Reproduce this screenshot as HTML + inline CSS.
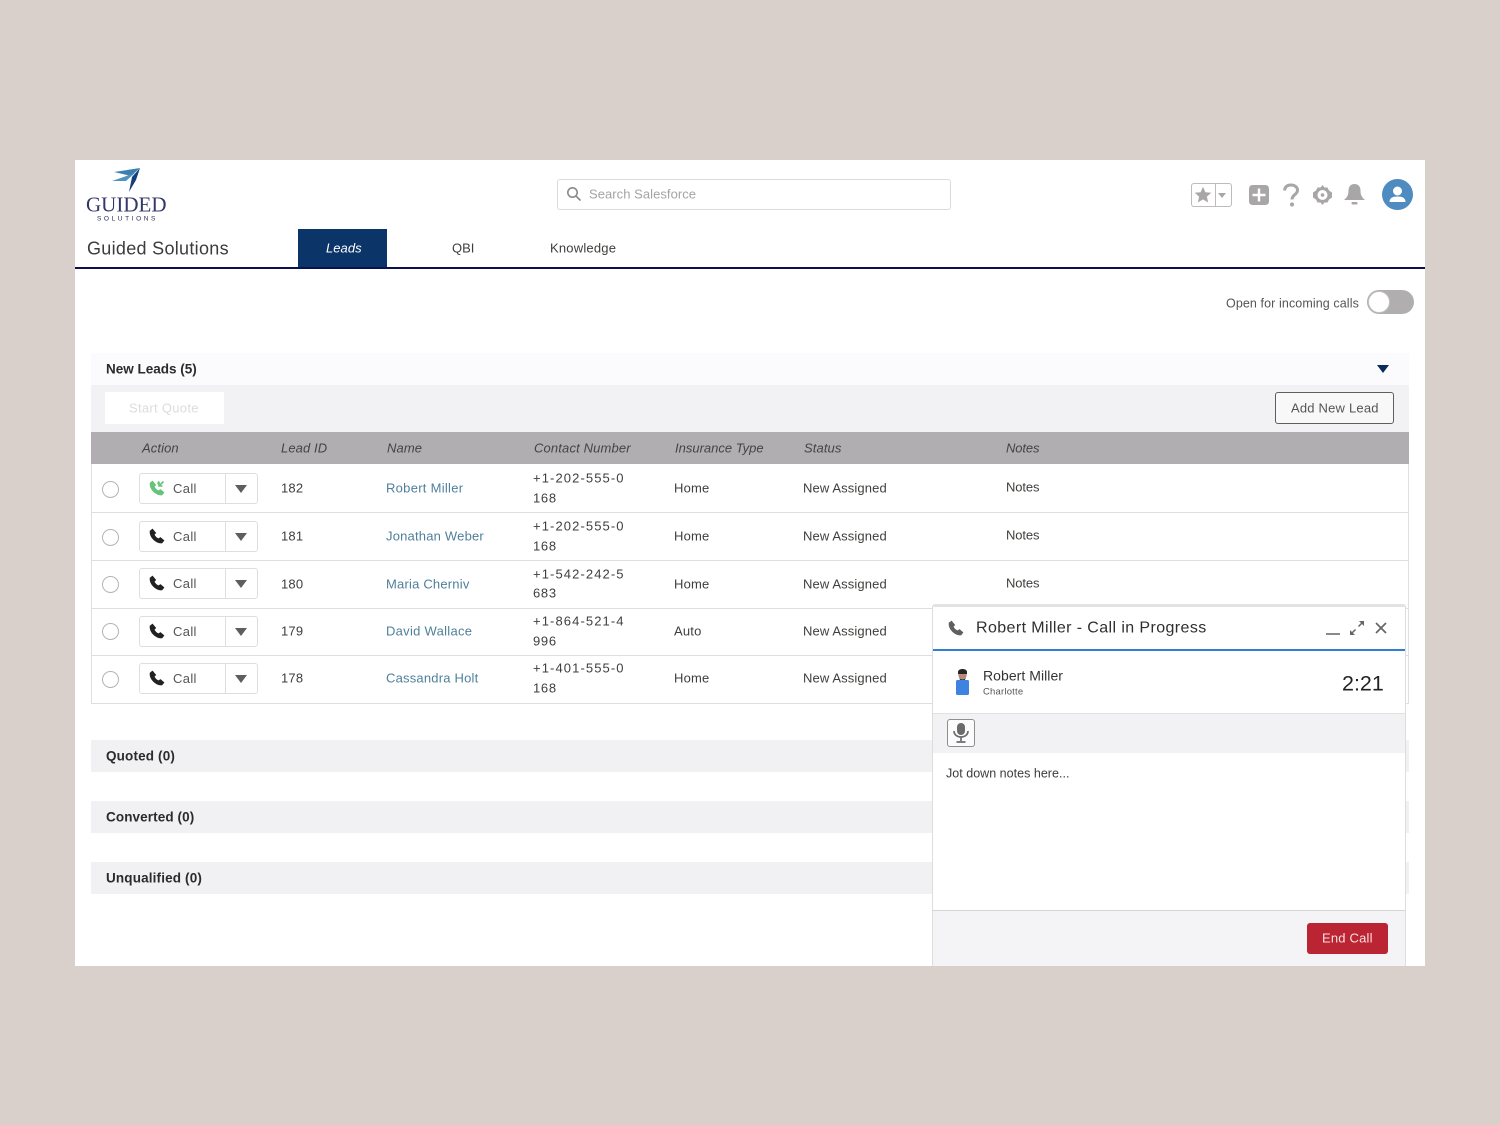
<!DOCTYPE html>
<html><head><meta charset="utf-8"><style>
html,body{margin:0;padding:0;background:#d9d0cb}
body{width:1500px;height:1125px;position:relative;overflow:hidden;font-family:"Liberation Sans",sans-serif;color:#3e3e3c}
#app{position:absolute;left:75px;top:160px;width:1350px;height:806px;background:#fff;overflow:hidden;filter:blur(.3px)}
.a{position:absolute}
.t{position:absolute;white-space:nowrap;font-size:13px;letter-spacing:.2px;line-height:16px;transform:translateY(calc(-50% + .5px))}
.h{font-style:italic;color:#444;letter-spacing:.1px}
.l{color:#4f7f9b;letter-spacing:.28px}
.s{letter-spacing:.12px}
.n{letter-spacing:-.1px}
.c1{letter-spacing:1.1px}
.c2{letter-spacing:.7px}
.b{font-weight:bold;font-size:13.5px;color:#2b2b2b;letter-spacing:.2px}
.bar{position:absolute;left:16px;width:1318px;height:32px;background:#f1f0f2}
.row{position:absolute;left:16px;width:1318px;border-bottom:1px solid #e0dedd}
.radio{position:absolute;left:27px;width:15px;height:15px;border:1px solid #b5b3b3;border-radius:50%;background:#fff}
.btn{position:absolute;left:64px;width:117px;height:29px;border:1px solid #e0dedd;border-radius:3px;background:#fff}
.btn i{position:absolute;left:85px;top:0;bottom:0;border-left:1px solid #e0dedd}
.btn b{position:absolute;left:95px;top:11px;width:0;height:0;border-left:6px solid transparent;border-right:6px solid transparent;border-top:8px solid #5e5e5e}
.btn svg{position:absolute;left:9px;top:6px}
.btn span{position:absolute;left:33px;top:6.500px;font-size:13px;letter-spacing:.35px;line-height:16px;color:#555}
</style></head><body>
<div id="app">
<!-- logo -->
<svg class="a" style="left:36px;top:6px" width="32" height="28" viewBox="0 0 32 28"><path d="M3 6L29 2L20 10Z" fill="#3d7fb0"/><path d="M1 15L24 7L15 15Z" fill="#4f93c2"/><path d="M29 2L25 14L18 26L21 11Z" fill="#143f7c"/></svg>
<div class="t" style="left:11px;top:44px;font-family:'Liberation Serif',serif;font-size:21px;letter-spacing:0;color:#34376a">GUIDED</div>
<div class="t" style="left:22px;top:59px;font-size:6.5px;letter-spacing:2.6px;color:#2a2d55">SOLUTIONS</div>
<div class="t" style="left:12px;top:88px;font-size:18px;letter-spacing:.3px;color:#3c3c3c">Guided Solutions</div>
<div class="a" style="left:223px;top:69px;width:89px;height:38px;background:#0b3568"></div>
<div class="t" style="left:251px;top:88px;color:#fff;font-style:italic;letter-spacing:.05px">Leads</div>
<div class="t" style="left:377px;top:88px;letter-spacing:0">QBI</div>
<div class="t" style="left:475px;top:88px">Knowledge</div>
<div class="a" style="left:0;top:107px;width:1350px;height:2px;background:#0c0f50"></div>
<!-- search -->
<div class="a" style="left:482px;top:19px;width:392px;height:29px;border:1px solid #dddbda;border-radius:3px;background:#fff"></div>
<svg class="a" style="left:491px;top:26px" width="16" height="16" viewBox="0 0 16 16" fill="none" stroke="#8a8a8a" stroke-width="1.6"><circle cx="6.5" cy="6.5" r="4.7"/><path d="M10 10L14.5 14.5"/></svg>
<div class="t" style="left:514px;top:34px;color:#a5a3a3;letter-spacing:.05px">Search Salesforce</div>
<!-- top icons -->
<div class="a" style="left:1116px;top:23px;width:39px;height:22px;border:1px solid #bdbbbb;border-radius:3px"></div>
<div class="a" style="left:1140px;top:23px;width:1px;height:24px;background:#bdbbbb"></div>
<svg class="a" style="left:1119px;top:26px" width="18" height="17" viewBox="0 0 24 23"><path d="M12 1l3.2 7.4 8 .7-6 5.3 1.8 7.9-7-4.2-7 4.2 1.8-7.9-6-5.3 8-.7z" fill="#a8a6a6"/></svg>
<div class="a" style="left:1143px;top:33px;border-left:4px solid transparent;border-right:4px solid transparent;border-top:5px solid #a8a6a6"></div>
<svg class="a" style="left:1174px;top:25px" width="20" height="20" viewBox="0 0 20 20"><rect width="20" height="20" rx="3.5" fill="#a8a6a6"/><path d="M10 3.5v13M3.5 10h13" stroke="#fff" stroke-width="2.4"/></svg>
<svg class="a" style="left:1207px;top:23px" width="18" height="24" viewBox="0 0 18 24" fill="none"><path d="M2.5 7.500C3 3.500 5.500 2 9 2c3.600 0 6.500 2 6.500 5.200 0 4.300-5.500 4.500-5.500 9.300" stroke="#a8a6a6" stroke-width="3"/><circle cx="10" cy="21.500" r="2.100" fill="#a8a6a6"/></svg>
<svg class="a" style="left:1237px;top:24px" width="21" height="22" viewBox="0 0 21 22"><path d="M10.500 1l2 2.500h3L17 6.500l3 2v5l-3 2-1.500 3h-3l-2 2.500-2-2.500h-3L4 15.500l-3-2v-5l3-2 1.500-3h3z" fill="#a8a6a6"/><circle cx="10.500" cy="11" r="5" fill="#fff"/><circle cx="10.500" cy="11" r="1.800" fill="#a8a6a6"/></svg>
<svg class="a" style="left:1268px;top:23px" width="23" height="23" viewBox="0 0 23 23"><path d="M11.500 1c4 0 6 3 6 6.500 0 4 1 6.500 4.500 9.500H1c3.500-3 4.500-5.500 4.500-9.500C5.500 4 7.500 1 11.500 1z" fill="#a8a6a6"/><rect x="8.500" y="19" width="6" height="2.500" rx="1" fill="#a8a6a6"/></svg>
<svg class="a" style="left:1307px;top:19px" width="31" height="31" viewBox="0 0 31 31"><circle cx="15.500" cy="15.500" r="15.500" fill="#4d8bc0"/><circle cx="15.500" cy="12" r="4.500" fill="#fff"/><path d="M7.500 23c0-4 3-5.500 8-5.500s8 1.500 8 5.500z" fill="#fff"/></svg>
<!-- toggle -->
<div class="t" style="left:1151px;top:143px;font-size:12.500px;letter-spacing:.1px;color:#555">Open for incoming calls</div>
<div class="a" style="left:1292px;top:130px;width:47px;height:24px;border-radius:12px;background:#b0aeae"></div>
<div class="a" style="left:1293px;top:131px;width:20px;height:20px;border-radius:50%;background:#fff;border:1px solid #c4c2c2"></div>
<!-- new leads -->
<div class="a" style="left:16px;top:193px;width:1318px;height:32px;background:#fbfafc"></div>
<div class="t b" style="left:31px;top:209px;letter-spacing:0">New Leads (5)</div>
<div class="a" style="left:1302px;top:205px;border-left:6.500px solid transparent;border-right:6.500px solid transparent;border-top:8px solid #0b2a5e"></div>
<div class="a" style="left:16px;top:225px;width:1318px;height:47px;background:#f2f1f3"></div>
<div class="a" style="left:30px;top:232px;width:119px;height:32px;background:#fff"></div>
<div class="t" style="left:54px;top:248px;color:#dcdcdc;letter-spacing:.3px">Start Quote</div>
<div class="a" style="left:1200px;top:232px;width:117px;height:30px;border:1px solid #5e5e5e;border-radius:3px;background:#f8f8f9"></div>
<div class="t" style="left:1216px;top:248px;color:#555">Add New Lead</div>
<!-- table head -->
<div class="a" style="left:16px;top:272px;width:1318px;height:32px;background:#b0aeb0"></div>
<div class="t h" style="left:67px;top:288px">Action</div>
<div class="t h" style="left:206px;top:288px">Lead ID</div>
<div class="t h" style="left:312px;top:288px">Name</div>
<div class="t h" style="left:459px;top:288px;letter-spacing:.15px">Contact Number</div>
<div class="t h" style="left:600px;top:288px;letter-spacing:0">Insurance Type</div>
<div class="t h" style="left:729px;top:288px">Status</div>
<div class="t h" style="left:931px;top:288px;letter-spacing:-.1px">Notes</div>
<div class="a" style="left:16px;top:304px;width:1px;height:240px;background:#e2e0df"></div>
<div class="a" style="left:1333px;top:304px;width:1px;height:240px;background:#e2e0df"></div>
<svg width="0" height="0" style="position:absolute"><defs><path id="ph" d="M3.500 1L1 3c-.5 6 5.500 12.500 12 12l2-2.500-3.500-3-2 1.300C7.500 10 6 8.500 5.200 6.500L6.800 5z"/></defs></svg>
<!-- rows -->
<div class="row" style="top:304px;height:48px"></div>
<div class="radio" style="top:321px"></div>
<div class="btn" style="top:313px"><svg width="16" height="16" viewBox="0 0 16 16" fill="#67c27a" stroke="#67c27a" stroke-width=".6"><use href="#ph"/><path d="M9 1.500l1 1-1.500 1.500M14.500 1.500L10 6M10 2.500v3.500h3.500" fill="none" stroke="#67c27a" stroke-width="1.600"/></svg><span>Call</span><i></i><b></b></div>
<div class="t" style="left:206px;top:328px">182</div><div class="t l" style="left:311px;top:328px">Robert Miller</div>
<div class="t c1" style="left:458px;top:318px">+1-202-555-0</div><div class="t c2" style="left:458px;top:338px">168</div>
<div class="t" style="left:599px;top:328px">Home</div><div class="t s" style="left:728px;top:328px">New Assigned</div><div class="t n" style="left:931px;top:327px">Notes</div>

<div class="row" style="top:353px;height:47px"></div>
<div class="radio" style="top:369px"></div>
<div class="btn" style="top:361px"><svg width="16" height="16" viewBox="0 0 16 16" fill="#222" stroke="#222" stroke-width=".6"><use href="#ph"/></svg><span>Call</span><i></i><b></b></div>
<div class="t" style="left:206px;top:376px">181</div><div class="t l" style="left:311px;top:376px;letter-spacing:.2px">Jonathan Weber</div>
<div class="t c1" style="left:458px;top:366px">+1-202-555-0</div><div class="t c2" style="left:458px;top:386px">168</div>
<div class="t" style="left:599px;top:376px">Home</div><div class="t s" style="left:728px;top:376px">New Assigned</div><div class="t n" style="left:931px;top:375px">Notes</div>

<div class="row" style="top:401px;height:47px"></div>
<div class="radio" style="top:416px"></div>
<div class="btn" style="top:408px"><svg width="16" height="16" viewBox="0 0 16 16" fill="#222" stroke="#222" stroke-width=".6"><use href="#ph"/></svg><span>Call</span><i></i><b></b></div>
<div class="t" style="left:206px;top:424px">180</div><div class="t l" style="left:311px;top:424px;letter-spacing:.2px">Maria Cherniv</div>
<div class="t c1" style="left:458px;top:414px">+1-542-242-5</div><div class="t c2" style="left:458px;top:433px">683</div>
<div class="t" style="left:599px;top:424px">Home</div><div class="t s" style="left:728px;top:424px">New Assigned</div><div class="t n" style="left:931px;top:423px">Notes</div>

<div class="row" style="top:449px;height:46px"></div>
<div class="radio" style="top:463px"></div>
<div class="btn" style="top:456px"><svg width="16" height="16" viewBox="0 0 16 16" fill="#222" stroke="#222" stroke-width=".6"><use href="#ph"/></svg><span>Call</span><i></i><b></b></div>
<div class="t" style="left:206px;top:471px">179</div><div class="t l" style="left:311px;top:471px">David Wallace</div>
<div class="t c1" style="left:458px;top:461px">+1-864-521-4</div><div class="t c2" style="left:458px;top:481px">996</div>
<div class="t" style="left:599px;top:471px">Auto</div><div class="t s" style="left:728px;top:471px">New Assigned</div>

<div class="row" style="top:496px;height:47px"></div>
<div class="radio" style="top:511px"></div>
<div class="btn" style="top:503px"><svg width="16" height="16" viewBox="0 0 16 16" fill="#222" stroke="#222" stroke-width=".6"><use href="#ph"/></svg><span>Call</span><i></i><b></b></div>
<div class="t" style="left:206px;top:518px">178</div><div class="t l" style="left:311px;top:518px;letter-spacing:.2px">Cassandra Holt</div>
<div class="t c1" style="left:458px;top:508px">+1-401-555-0</div><div class="t c2" style="left:458px;top:528px">168</div>
<div class="t" style="left:599px;top:518px">Home</div><div class="t s" style="left:728px;top:518px">New Assigned</div>
<!-- sections -->
<div class="bar" style="top:580px"></div><div class="t b" style="left:31px;top:596px;letter-spacing:.15px">Quoted (0)</div>
<div class="bar" style="top:641px"></div><div class="t b" style="left:31px;top:657px;letter-spacing:.1px">Converted (0)</div>
<div class="bar" style="top:702px"></div><div class="t b" style="left:31px;top:718px;letter-spacing:.15px">Unqualified (0)</div>
<!-- call panel -->
<div class="a" style="left:857px;top:444px;width:472px;height:362px;background:#fff;border:1px solid #dedcdc;border-bottom:0;border-top:3px solid #e4e3e3;border-radius:3px 3px 0 0"></div>
<div class="a" style="left:858px;top:489px;width:472px;height:2px;background:#2f7fd3"></div>
<svg class="a" style="left:873px;top:460px" width="16" height="16" viewBox="0 0 16 16" fill="#5f5f5f" stroke="#5f5f5f" stroke-width=".6"><use href="#ph"/></svg>
<div class="t" style="left:901px;top:468px;font-size:16px;letter-spacing:.4px;color:#2f2f2f">Robert Miller - Call in Progress</div>
<div class="a" style="left:1251px;top:473px;width:14px;height:2px;background:#8a8a8a"></div>
<svg class="a" style="left:1274px;top:460px" width="16" height="16" viewBox="0 0 16 16" fill="none" stroke="#666" stroke-width="1.500"><path d="M2 14L6.500 9.500M9.500 6.500L14 2"/><path d="M1 10v5h5zM10 1h5v5z" stroke="none" fill="#666"/></svg>
<svg class="a" style="left:1299px;top:461px" width="14" height="14" viewBox="0 0 14 14" stroke="#666" stroke-width="1.700"><path d="M2 2l10 10M12 2L2 12"/></svg>
<svg class="a" style="left:878px;top:505px" width="18" height="30" viewBox="0 0 18 30"><rect x="3" y="15" width="13" height="15" rx="1.500" fill="#3f83e0"/><circle cx="9.500" cy="10" r="4.200" fill="#b98a78"/><path d="M5 7c0-4 9-4 9 0v2H5z" fill="#262626"/><path d="M6 12c1 3 6 3 7 0l-1 3H7z" fill="#333"/></svg>
<div class="t" style="left:908px;top:515px;font-size:14px;letter-spacing:.05px;color:#333">Robert Miller</div>
<div class="t" style="left:908px;top:532px;font-size:9.500px;letter-spacing:.2px;color:#555">Charlotte</div>
<div class="t" style="left:1267px;top:523px;font-size:21.500px;letter-spacing:0;color:#222">2:21</div>
<div class="a" style="left:858px;top:553px;width:472px;height:40px;background:#f2f1f3;border-top:1px solid #e2e0e0;box-sizing:border-box"></div>
<div class="a" style="left:872px;top:559px;width:26px;height:26px;border:1px solid #8e8e8e;border-radius:3px;background:#fbfbfb"></div>
<svg class="a" style="left:876px;top:562px" width="20" height="22" viewBox="0 0 20 22" fill="none"><rect x="6" y="1" width="8" height="12" rx="4" fill="#6b6b6b"/><path d="M3 9c0 8 14 8 14 0M10 15v4M5.500 20h9" stroke="#6b6b6b" stroke-width="1.700"/></svg>
<div class="t" style="left:871px;top:613px;font-size:12.500px;letter-spacing:.02px;color:#3c3c3c">Jot down notes here...</div>
<div class="a" style="left:858px;top:750px;width:472px;height:56px;background:#f4f3f5;border-top:1px solid #d5d3d6;box-sizing:border-box"></div>
<div class="a" style="left:1232px;top:763px;width:81px;height:31px;background:#ba2433;border-radius:3px"></div>
<div class="t" style="left:1247px;top:778px;color:#f8e0e0;letter-spacing:.2px">End Call</div>
</div>
</body></html>
